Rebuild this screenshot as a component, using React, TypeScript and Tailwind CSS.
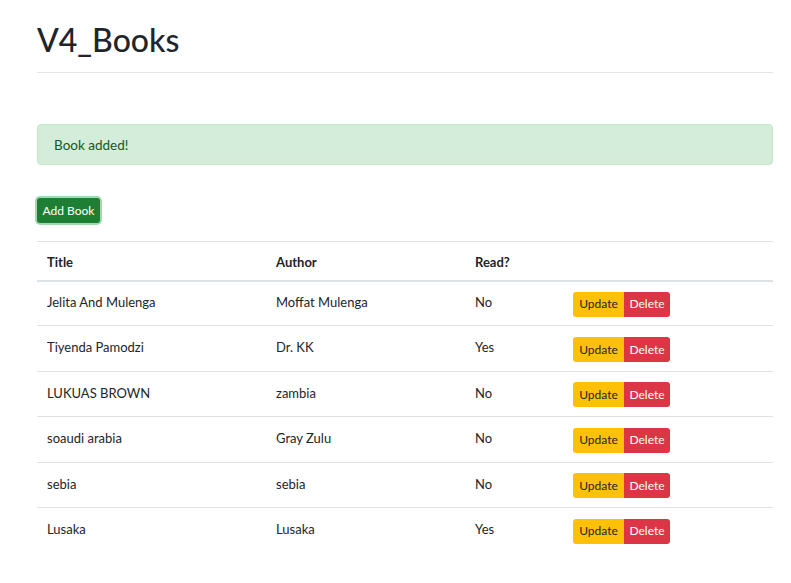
import React from "react";

const rows = [
  ["Jelita And Mulenga", "Moffat Mulenga", "No"],
  ["Tiyenda Pamodzi", "Dr. KK", "Yes"],
  ["LUKUAS BROWN", "zambia", "No"],
  ["soaudi arabia", "Gray Zulu", "No"],
  ["sebia", "sebia", "No"],
  ["Lusaka", "Lusaka", "Yes"],
];

export default function App() {
  return (
    <div
      className="min-h-[583px] bg-white text-[#212529]"
      style={{ fontFamily: "Lato, 'Open Sans', sans-serif" }}
    >
      <div className="ml-[37px] w-[736px] pt-[20px]">
        <h1 className="text-[32px] font-medium leading-[40px] mb-[12px]">V4_Books</h1>
        <hr className="border-0 border-t border-[#e5e5e5] m-0" />
        <div className="h-[51px]" />
        <div className="h-[41px] rounded-[4px] border border-[#c3e6cb] bg-[#d4edda] text-[#155724] px-[16px] pt-[2px] flex items-center text-[13.5px]">
          Book added!
        </div>
        <div className="h-[33px]" />
        <button className="block h-[25px] w-[63px] rounded-[3px] bg-[#1e7e34] text-white text-[12px] shadow-[0_0_0_2px_rgba(72,180,97,0.5)]">
          Add Book
        </button>
        <div className="h-[18px]" />
        <table className="w-full border-collapse text-[13px]">
          <thead>
            <tr className="border-t border-[#dee2e6]">
              <th className="w-[229px] h-[39px] px-[10px] pt-[3px] text-left font-bold border-b-2 border-[#dee2e6]">Title</th>
              <th className="w-[199px] px-[10px] pt-[3px] text-left font-bold border-b-2 border-[#dee2e6]">Author</th>
              <th className="w-[98px] px-[10px] pt-[3px] text-left font-bold border-b-2 border-[#dee2e6]">Read?</th>
              <th className="px-[10px] border-b-2 border-[#dee2e6]"></th>
            </tr>
          </thead>
          <tbody>
            {rows.map((r, i) => (
              <tr key={i} className="border-b border-[#dee2e6] last:border-b-0">
                <td className="h-[45.4px] px-[10px] align-middle pb-[1px]">{r[0]}</td>
                <td className="px-[10px] align-middle pb-[1px]">{r[1]}</td>
                <td className="px-[10px] align-middle pb-[1px]">{r[2]}</td>
                <td className="px-[10px] pt-[2px] align-middle">
                  <div className="flex">
                    <button className="h-[25px] w-[51px] rounded-l-[3px] bg-[#ffc107] text-[#212529] text-[12px]">Update</button>
                    <button className="h-[25px] w-[46px] rounded-r-[3px] bg-[#dc3545] text-white text-[12px]">Delete</button>
                  </div>
                </td>
              </tr>
            ))}
          </tbody>
        </table>
      </div>
    </div>
  );
}
